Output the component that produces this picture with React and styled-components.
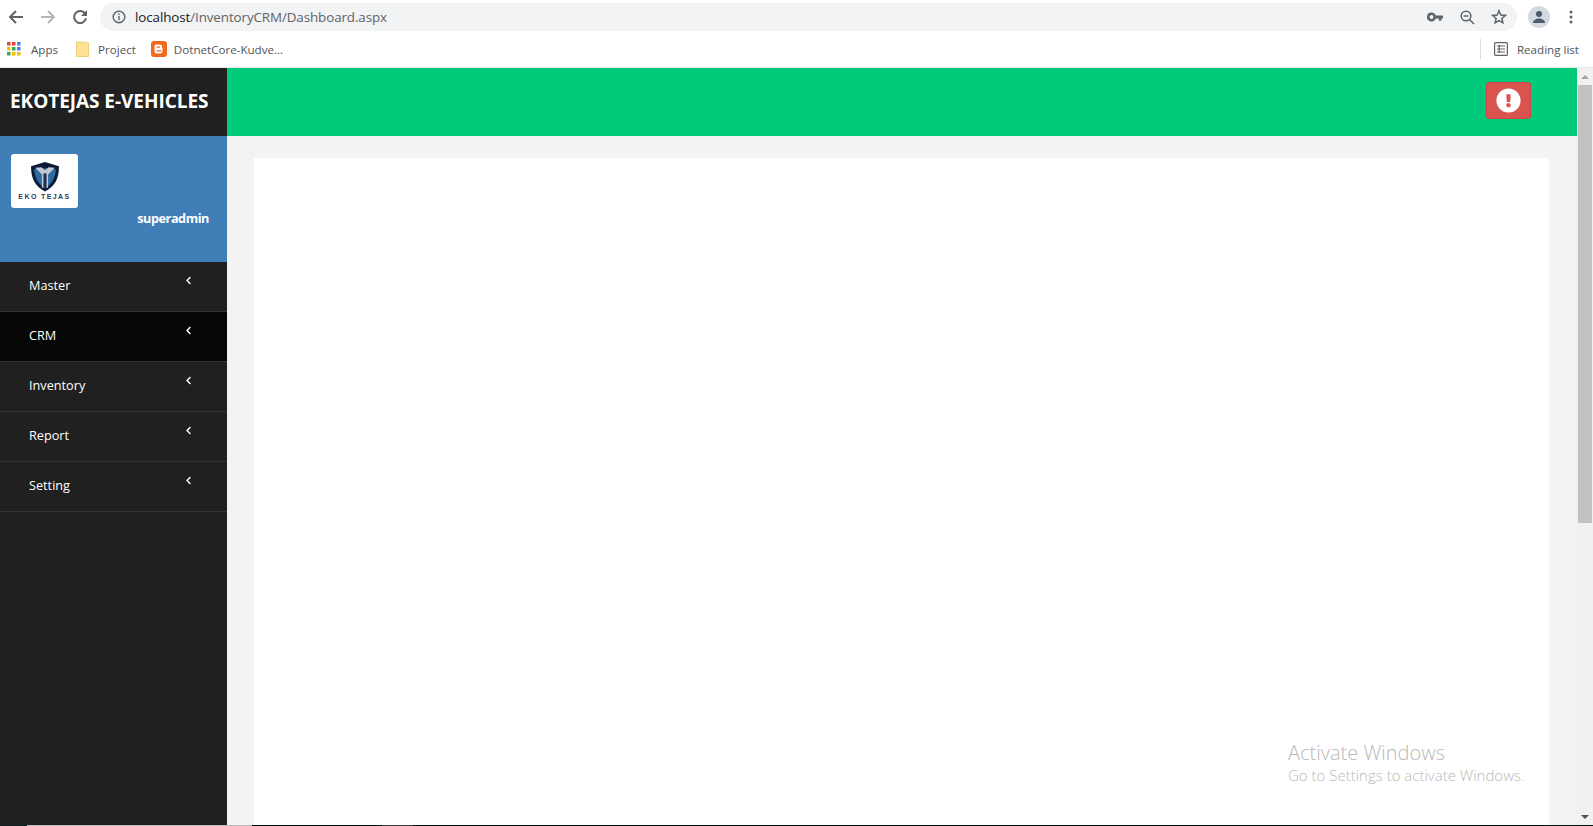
import React from "react";
import styled, { createGlobalStyle } from "styled-components";
import { FaExclamationCircle, FaChevronLeft } from "react-icons/fa";

const GlobalStyle = createGlobalStyle`
  html, body {
    margin: 0;
    padding: 0;
    height: 100%;
    overflow: hidden;
    background: #fff;
    font-family: "Open Sans", "Liberation Sans", sans-serif;
  }
`;

const Screen = styled.div`
  position: relative;
  height: 826px;
  display: flex;
  flex-direction: column;
`;

const Toolbar = styled.div`
  height: 34px;
  display: flex;
  align-items: center;
  background: #fff;
`;

const NavButton = styled.button`
  width: 32px;
  height: 30px;
  padding: 0;
  border: 0;
  background: none;
  display: flex;
  align-items: center;
  justify-content: center;
  color: ${(p) => (p.$off ? "#b4b6b8" : "#5f6368")};
`;

const MoreButton = styled(NavButton)`
  margin-left: 5px;
`;

const Omnibox = styled.div`
  margin-left: 4px;
  width: 1417px;
  height: 28px;
  border-radius: 14px;
  background: #f1f3f4;
  display: flex;
  align-items: center;
  padding: 0 2px 0 12px;
  box-sizing: border-box;
  color: #5f6368;
`;

const Url = styled.div`
  margin-left: 9px;
  font-size: 13.4px;
  letter-spacing: -0.1px;
  color: #5f6368;
  flex: 1;
  b {
    font-weight: 400;
    color: #202124;
  }
`;

const OmniIcon = styled.span`
  width: 32px;
  display: flex;
  justify-content: center;
  color: #5f6368;
`;

const Avatar = styled.div`
  margin-left: 11px;
  width: 22px;
  height: 22px;
  border-radius: 50%;
  background: #d5d9e0;
  display: flex;
  align-items: center;
  justify-content: center;
`;

const Bookmarks = styled.div`
  height: 33px;
  box-sizing: border-box;
  padding: 0 0 3px 7px;
  display: flex;
  align-items: center;
  font-size: 11.6px;
  color: #50555a;
`;

const Bookmark = styled.div`
  display: flex;
  align-items: center;
  gap: ${(p) => p.$inner}px;
  margin-right: ${(p) => p.$gap}px;
`;

const ReadingList = styled.div`
  margin-left: auto;
  margin-right: 14px;
  padding-left: 13px;
  height: 20px;
  border-left: 1px solid #dadce0;
  display: flex;
  align-items: center;
  gap: 9px;
`;

const Page = styled.div`
  flex: 1;
  min-height: 0;
  display: flex;
  border-top: 1px solid #e2e4e6;
`;

const Sidebar = styled.aside`
  width: 227px;
  flex: none;
  background: #202020;
  display: flex;
  flex-direction: column;
`;

const Brand = styled.div`
  height: 68px;
  flex: none;
  box-sizing: border-box;
  padding: 0 0 3px 10px;
  display: flex;
  align-items: center;
  font-size: 19px;
  font-weight: 700;
  letter-spacing: -0.05px;
  color: #fff;
  white-space: nowrap;
`;

const Profile = styled.div`
  height: 126px;
  flex: none;
  background: #417db7;
  padding: 18px 18px 0 11px;
  box-sizing: border-box;
`;

const LogoCard = styled.div`
  width: 67px;
  height: 54px;
  background: #fff;
  border-radius: 3px;
  display: flex;
  flex-direction: column;
  align-items: center;
  padding-top: 7px;
  box-sizing: border-box;
`;

const LogoText = styled.span`
  font-family: "Liberation Sans", sans-serif;
  font-size: 7px;
  font-weight: 700;
  letter-spacing: 1.4px;
  line-height: 8px;
  margin-top: 1px;
  color: #2a3a66;
  white-space: nowrap;
`;

const UserName = styled.div`
  margin-top: 1px;
  text-align: right;
  font-size: 12.7px;
  font-weight: 700;
  letter-spacing: -0.45px;
  color: #fff;
`;

const Menu = styled.nav`
  display: flex;
  flex-direction: column;
`;

const MenuItem = styled.div`
  height: 50px;
  box-sizing: border-box;
  border-bottom: 1px solid #333;
  background: ${(p) => (p.$active ? "#060606" : "#202020")};
  display: flex;
  justify-content: space-between;
  padding: 14px 34px 0 29px;
  font-size: 12.7px;
  line-height: 19px;
  color: #fff;
`;

const Caret = styled.span`
  line-height: 11px;
  font-size: 9px;
  color: #fff;
`;

const Main = styled.main`
  flex: 1;
  min-width: 0;
  display: flex;
  flex-direction: column;
  background: #f3f3f3;
`;

const TopBar = styled.header`
  height: 68px;
  flex: none;
  box-sizing: border-box;
  background: #00cb7b;
  display: flex;
  align-items: center;
  justify-content: flex-end;
  padding: 0 46px 4px 0;
`;

const AlertButton = styled.button`
  width: 45px;
  height: 37px;
  padding: 0;
  border: 1px solid #c9474a;
  border-radius: 3px;
  background: #d9534f;
  color: #fff;
  display: flex;
  align-items: center;
  justify-content: center;
  font-size: 25px;
`;

const Content = styled.div`
  flex: 1;
  min-height: 0;
  margin: 22px 28px 0 27px;
  background: #fff;
`;

const Scrollbar = styled.div`
  width: 16px;
  flex: none;
  background: #f1f1f1;
  display: flex;
  flex-direction: column;
  align-items: center;
`;

const ScrollArrow = styled.div`
  height: 17px;
  flex: none;
  display: flex;
  align-items: center;
  justify-content: center;
  &::before {
    content: "";
    border-left: 4px solid transparent;
    border-right: 4px solid transparent;
    ${(p) => (p.$down ? "border-top: 4px solid #505050;" : "border-bottom: 4px solid #a3a3a3;")}
  }
`;

const ScrollThumb = styled.div`
  width: 14px;
  height: 438px;
  flex: none;
  background: #c1c1c1;
`;

const ScrollTrack = styled.div`
  flex: 1;
`;

const TaskbarEdge = styled.div`
  height: 1px;
  flex: none;
  display: flex;
  background: #06100f;
`;

const EdgeSpan = styled.div`
  width: ${(p) => p.$w}px;
  background: ${(p) => p.$c};
`;

const Watermark = styled.div`
  position: absolute;
  left: 1288px;
  top: 741px;
  color: #b9b9b9;
  font-family: "Open Sans", sans-serif;
  pointer-events: none;
`;

const WatermarkTitle = styled.div`
  font-size: 20px;
  line-height: 24px;
  font-weight: 300;
  white-space: nowrap;
`;

const WatermarkSub = styled.div`
  font-size: 15px;
  line-height: 20px;
  font-weight: 300;
  white-space: nowrap;
`;

const BackIcon = () => (
  <svg width="16" height="16" viewBox="0 0 16 16" fill="none" stroke="currentColor" strokeWidth="2">
    <path d="M15 8H2M8 2 2 8l6 6" />
  </svg>
);

const ForwardIcon = () => (
  <svg width="16" height="16" viewBox="0 0 16 16" fill="none" stroke="currentColor" strokeWidth="2">
    <path d="M1 8h13M8 2l6 6-6 6" />
  </svg>
);

const ReloadIcon = () => (
  <svg width="16" height="16" viewBox="0 0 16 16" fill="none">
    <path d="M13.3 5A6 6 0 1 0 14 9.3" stroke="currentColor" strokeWidth="2" />
    <path d="M15 1v6H9z" fill="currentColor" />
  </svg>
);

const InfoIcon = () => (
  <svg width="14" height="14" viewBox="0 0 14 14" fill="none" stroke="currentColor" strokeWidth="1.4">
    <circle cx="7" cy="7" r="5.8" />
    <path d="M7 6v4.2M7 3.4v1.5" />
  </svg>
);

const KeyIcon = () => (
  <svg width="16" height="10" viewBox="0 0 16 10" fill="#5f6368">
    <path fillRule="evenodd" d="M4.5 0.5a4.5 4.5 0 0 1 4.2 3H16v3h-1.6v2.2h-2.6V6.5H8.7a4.5 4.5 0 1 1-4.2-6zm0 2.6a1.9 1.9 0 1 0 0 3.8 1.9 1.9 0 0 0 0-3.8z" />
  </svg>
);

const ZoomOutIcon = () => (
  <svg width="15" height="15" viewBox="0 0 15 15" fill="none" stroke="#5f6368" strokeWidth="1.5">
    <circle cx="6" cy="6" r="4.8" />
    <path d="M9.5 9.5 14 14M3.7 6h4.6" />
  </svg>
);

const StarIcon = () => (
  <svg width="16" height="16" viewBox="0 0 16 16" fill="none" stroke="#5f6368" strokeWidth="1.5">
    <path d="M8 1.8 9.8 6l4.5.4-3.4 3 1 4.4L8 11.5l-3.9 2.3 1-4.4-3.4-3L6.2 6z" />
  </svg>
);

const PersonIcon = () => (
  <svg width="14" height="14" viewBox="0 0 14 14" fill="#4c5a6e">
    <circle cx="7" cy="4" r="3" />
    <path d="M1 13c0-3 3-4.5 6-4.5s6 1.5 6 4.5z" />
  </svg>
);

const MoreIcon = () => (
  <svg width="4" height="14" viewBox="0 0 4 14" fill="#5f6368">
    <circle cx="2" cy="2" r="1.5" />
    <circle cx="2" cy="7" r="1.5" />
    <circle cx="2" cy="12" r="1.5" />
  </svg>
);

const AppsIcon = () => {
  const colors = ["#ea4335", "#ea4335", "#4285f4", "#fbbc04", "#34a853", "#4285f4", "#34a853", "#fbbc04", "#fbbc04"];
  return (
    <svg width="14" height="14" viewBox="0 0 14 14">
      {colors.map((c, i) => (
        <rect key={i} x={(i % 3) * 5} y={Math.floor(i / 3) * 5} width="3.5" height="3.5" fill={c} />
      ))}
    </svg>
  );
};

const FolderIcon = () => (
  <svg width="13" height="16" viewBox="0 0 13 16">
    <path d="M0.5 1h8l4 1v13.5h-12z" fill="#fde293" stroke="#eccf78" />
  </svg>
);

const BloggerIcon = () => (
  <svg width="16" height="16" viewBox="0 0 16 16">
    <rect width="16" height="16" rx="3" fill="#f06a1d" />
    <path d="M5.5 3.5h3A2.5 2.5 0 0 1 11 6v1h.5v3A2.5 2.5 0 0 1 9 12.5H6A2.5 2.5 0 0 1 3.5 10V5.500a2 2 0 0 1 2-2z" fill="#fff" />
    <path d="M6 6.2h2.5M6 9.8h4" stroke="#f06a1d" strokeWidth="1.3" strokeLinecap="round" />
  </svg>
);

const ListIcon = () => (
  <svg width="14" height="14" viewBox="0 0 14 14" fill="none" stroke="#5f6368" strokeWidth="1.2">
    <rect x="0.6" y="0.6" width="12.8" height="12.8" rx="1" />
    <path d="M3 4h8M3 7h8M3 10h8M5.2 3v8" />
  </svg>
);

const ShieldLogo = () => (
  <svg width="30" height="31" viewBox="0 0 29 30">
    <path d="M14.5 1 28 5c0 11-3 19-13.5 24.5C4 24 1 16 1 5z" fill="#0d1a3a" />
    <path d="M14.5 7 25 8c-.5 8-3.5 14-10.500 18.500C7.500 22 4.500 16 4 8z" fill="#2c6aa0" />
    <path d="M5 6.500 11 6l3.500 3L18 6l6 .5-6.500 6.500v13h-6V13z" fill="#c3c9d0" />
    <path d="M13 12h3v14h-3z" fill="#1b2c55" />
  </svg>
);

const menu = ["Master", "CRM", "Inventory", "Report", "Setting"];

export default function App() {
  return (
    <Screen>
      <GlobalStyle />
      <Toolbar>
        <NavButton><BackIcon /></NavButton>
        <NavButton $off><ForwardIcon /></NavButton>
        <NavButton><ReloadIcon /></NavButton>
        <Omnibox>
          <InfoIcon />
          <Url><b>localhost</b>/InventoryCRM/Dashboard.aspx</Url>
          <OmniIcon><KeyIcon /></OmniIcon>
          <OmniIcon><ZoomOutIcon /></OmniIcon>
          <OmniIcon><StarIcon /></OmniIcon>
        </Omnibox>
        <Avatar><PersonIcon /></Avatar>
        <MoreButton><MoreIcon /></MoreButton>
      </Toolbar>
      <Bookmarks>
        <Bookmark $inner={10} $gap={18}><AppsIcon /> Apps</Bookmark>
        <Bookmark $inner={9} $gap={15}><FolderIcon /> Project</Bookmark>
        <Bookmark $inner={7} $gap={0}><BloggerIcon /> DotnetCore-Kudve...</Bookmark>
        <ReadingList><ListIcon /> Reading list</ReadingList>
      </Bookmarks>
      <Page>
        <Sidebar>
          <Brand>EKOTEJAS E-VEHICLES</Brand>
          <Profile>
            <LogoCard>
              <ShieldLogo />
              <LogoText>EKO TEJAS</LogoText>
            </LogoCard>
            <UserName>superadmin</UserName>
          </Profile>
          <Menu>
            {menu.map((item) => (
              <MenuItem key={item} $active={item === "CRM"}>
                {item}
                <Caret><FaChevronLeft /></Caret>
              </MenuItem>
            ))}
          </Menu>
        </Sidebar>
        <Main>
          <TopBar>
            <AlertButton><FaExclamationCircle /></AlertButton>
          </TopBar>
          <Content />
        </Main>
        <Scrollbar>
          <ScrollArrow />
          <ScrollThumb />
          <ScrollTrack />
          <ScrollArrow $down />
        </Scrollbar>
      </Page>
      <TaskbarEdge>
        <EdgeSpan $w={27} $c="#0d1c1c" />
        <EdgeSpan $w={225} $c="#bdbdbd" />
        <EdgeSpan $w={130} $c="#06100f" />
        <EdgeSpan $w={31} $c="#3a3a3a" />
      </TaskbarEdge>
      <Watermark>
        <WatermarkTitle>Activate Windows</WatermarkTitle>
        <WatermarkSub>Go to Settings to activate Windows.</WatermarkSub>
      </Watermark>
    </Screen>
  );
}
